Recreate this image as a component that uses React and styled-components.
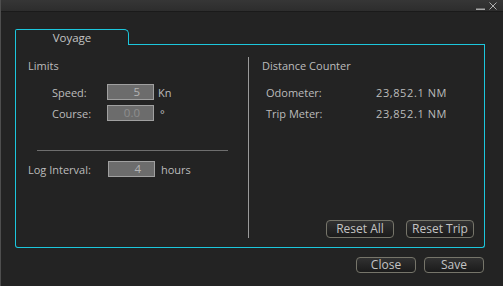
import React from "react";
import styled, { createGlobalStyle } from "styled-components";

const GlobalStyle = createGlobalStyle`
  html, body {
    margin: 0;
    padding: 0;
    background: #222222;
  }
  body {
    font-family: "Open Sans", "Noto Sans", sans-serif;
    font-size: 11px;
    color: #bcbcbc;
  }
`;

const Window = styled.div`
  width: 503px;
  height: 286px;
  box-sizing: border-box;
  background: #232323;
  border-left: 1px solid #4e4e4e;
  display: flex;
  flex-direction: column;
`;

const TitleBar = styled.div`
  height: 11px;
  background: linear-gradient(#363636, #2d2d2d);
  border-bottom: 1px solid #1a1a1a;
  display: flex;
  justify-content: flex-end;
  align-items: flex-start;
  padding-right: 2px;
`;

const Body = styled.div`
  flex: 1;
  display: flex;
  flex-direction: column;
  padding: 17px 18px 0 14px;
`;

const TabStrip = styled.div`
  display: flex;
  height: 16px;
`;

const Tab = styled.div`
  width: 112px;
  height: 15px;
  border: 1px solid #1cc6dc;
  border-bottom: none;
  border-radius: 2px 5px 0 0;
  text-align: center;
  line-height: 15px;
  font-size: 11.5px;
  color: #c4c4c4;
`;

const TabFill = styled.div`
  flex: 1;
  border-bottom: 1px solid #1cc6dc;
`;

const Panel = styled.div`
  height: 202px;
  display: flex;
  border: 1px solid #1cc6dc;
  border-top: none;
  border-radius: 0 0 3px 3px;
`;

const LeftCol = styled.div`
  width: 232px;
  padding: 13px 0 0 12px;
  box-sizing: border-box;
  display: flex;
  flex-direction: column;
`;

const Divider = styled.div`
  width: 1px;
  margin: 12px 0 9px;
  background: #9a9a9a;
`;

const RightCol = styled.div`
  flex: 1;
  padding: 13px 10px 9px 13px;
  display: flex;
  flex-direction: column;
`;

const SectionTitle = styled.div`
  line-height: 15px;
  height: 15px;
  margin-bottom: 11px;
`;

const Rows = styled.div`
  display: flex;
  flex-direction: column;
  gap: 5px;
  padding-left: ${(p) => p.$indent}px;
`;

const Row = styled.div`
  display: flex;
  align-items: center;
  height: 16px;
`;

const Label = styled.span`
  width: ${(p) => p.$w}px;
  flex-shrink: 0;
`;

const Reading = styled.span`
  letter-spacing: 0.6px;
`;

const ValueBox = styled.div`
  width: ${(p) => p.$w}px;
  height: 16px;
  box-sizing: border-box;
  background: #6c6c6c;
  border: 1px solid #a0a0a0;
  color: ${(p) => (p.$dim ? "#8e8e8e" : "#b4b4b4")};
  text-align: right;
  padding-right: 13px;
  line-height: 14px;
  font-size: 11.5px;
`;

const Unit = styled.span`
  margin-left: ${(p) => p.$gap}px;
`;

const Rule = styled.div`
  margin: 29px 0 10px 9px;
  width: 191px;
  height: 1px;
  background: #6e6e6e;
`;

const Spacer = styled.div`
  flex: 1;
`;

const ButtonRow = styled.div`
  display: flex;
  justify-content: flex-end;
  gap: ${(p) => p.$gap}px;
`;

const Button = styled.button`
  width: ${(p) => p.$w}px;
  height: ${(p) => p.$h}px;
  padding: 0;
  font-family: inherit;
  font-size: 12px;
  color: #c4c4c4;
  background: linear-gradient(#313131, #1b1b1b);
  border: 1px solid #76756a;
  border-radius: 4px;
  line-height: 1;
`;

const Footer = styled(ButtonRow)`
  margin-top: 9px;
  padding-right: 1px;
`;

const Controls = styled.svg`
  display: block;
`;

export default function App() {
  return (
    <>
      <GlobalStyle />
      <Window>
        <TitleBar>
          <Controls width="26" height="11" viewBox="0 0 26 11">
            <rect x="1" y="8.5" width="9" height="1.5" fill="#a8a8a8" />
            <path d="M14.5 2.5 L21.5 9.5 M21.5 2.5 L14.5 9.5" stroke="#b0b0b0" strokeWidth="1" />
          </Controls>
        </TitleBar>
        <Body>
          <TabStrip>
            <Tab>Voyage</Tab>
            <TabFill />
          </TabStrip>
          <Panel>
            <LeftCol>
              <SectionTitle>Limits</SectionTitle>
              <Rows $indent={24}>
                <Row>
                  <Label $w={55}>Speed:</Label>
                  <ValueBox $w={47}>5</ValueBox>
                  <Unit $gap={4}>Kn</Unit>
                </Row>
                <Row>
                  <Label $w={55}>Course:</Label>
                  <ValueBox $w={47} $dim>0.0</ValueBox>
                  <Unit $gap={6}>°</Unit>
                </Row>
              </Rows>
              <Rule />
              <Row>
                <Label $w={80}>Log Interval:</Label>
                <ValueBox $w={47}>4</ValueBox>
                <Unit $gap={6}>hours</Unit>
              </Row>
            </LeftCol>
            <Divider />
            <RightCol>
              <SectionTitle>Distance Counter</SectionTitle>
              <Rows $indent={4}>
                <Row>
                  <Label $w={110}>Odometer:</Label>
                  <Reading>23,852.1 NM</Reading>
                </Row>
                <Row>
                  <Label $w={110}>Trip Meter:</Label>
                  <Reading>23,852.1 NM</Reading>
                </Row>
              </Rows>
              <Spacer />
              <ButtonRow $gap={12}>
                <Button $w={68} $h={18}>Reset All</Button>
                <Button $w={68} $h={18}>Reset Trip</Button>
              </ButtonRow>
            </RightCol>
          </Panel>
          <Footer $gap={8}>
            <Button $w={60} $h={16}>Close</Button>
            <Button $w={60} $h={16}>Save</Button>
          </Footer>
        </Body>
      </Window>
    </>
  );
}
